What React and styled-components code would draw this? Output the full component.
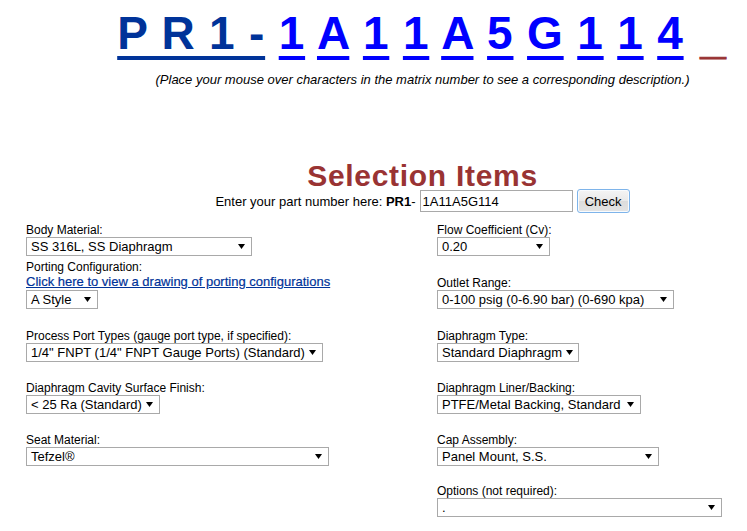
import React from "react";
import styled, { createGlobalStyle } from "styled-components";

const darkBlue = "#003399";
const brightBlue = "#0000ff";
const brick = "#993333";

const GlobalStyle = createGlobalStyle`
  body {
    margin: 8px;
    background: #ffffff;
    color: #000000;
    font-family: Arial, "Liberation Sans", sans-serif;
  }
`;

const Banner = styled.div`
  padding-left: 98px;
  text-align: center;
`;

const Matrix = styled.div`
  font-size: 46px;
  font-weight: bold;
  line-height: 51px;
  letter-spacing: 0.8px;
  white-space: nowrap;
`;

const PrefixLink = styled.a`
  color: ${darkBlue};
  text-decoration: underline;
  text-decoration-thickness: 4px;
  text-underline-offset: 7px;
`;

const CharLink = styled(PrefixLink)`
  color: ${brightBlue};
`;

// trailing blank position of the matrix number, drawn as a brick-red underscore
const Blank = styled.span`
  color: ${brick};
  line-height: 0;
  vertical-align: -4px;
  margin-left: 3px;
  -webkit-text-stroke: 0.8px ${brick};
  letter-spacing: 2px;
`;

const Hint = styled.p`
  margin: 13px 0 0;
  font-size: 13px;
  font-style: italic;
  line-height: 15px;
`;

const Title = styled.h1`
  margin: 75px 0 0;
  font-size: 30px;
  line-height: 28px;
  letter-spacing: 0.7px;
  font-weight: bold;
  color: ${brick};
`;

const EntryRow = styled.div`
  display: flex;
  justify-content: center;
  align-items: center;
  height: 22px;
  font-size: 13px;
`;

const Prompt = styled.span`
  white-space: nowrap;
`;

const PartInput = styled.input`
  box-sizing: border-box;
  width: 153px;
  height: 22px;
  margin: 0 0 0 4px;
  padding: 0 2px;
  border: 1px solid #a9a9a9;
  font-family: Arial, "Liberation Sans", sans-serif;
  font-size: 13px;
  color: #000;
  outline: none;
`;

const CheckButton = styled.button`
  box-sizing: border-box;
  width: 53px;
  height: 24px;
  margin-left: 4px;
  padding: 0;
  border: 1px solid #7eb4ea;
  border-radius: 3px;
  background: linear-gradient(#f4f4f4, #e9e9e9 50%, #dcdcdc 51%, #e4e4e4);
  box-shadow: inset 0 0 0 1px #f8fbfe;
  font-family: Arial, "Liberation Sans", sans-serif;
  font-size: 13px;
  color: #000;
`;

const Form = styled.div`
  margin-top: 11px;
  padding-left: 18px;
`;

const Row = styled.div`
  display: grid;
  grid-template-columns: 411px 1fr;
  align-items: end;
  margin-top: ${(p) => p.$gap}px;
`;

const Field = styled.div`
  display: flex;
  flex-direction: column;
  align-items: flex-start;
`;

const Label = styled.span`
  font-size: 12px;
  line-height: 14px;
`;

const DrawingLink = styled.a`
  font-size: 13px;
  line-height: 16px;
  color: ${darkBlue};
  text-decoration: underline;
  -webkit-text-stroke: 0.2px ${darkBlue};
`;

const SelectBox = styled.div`
  box-sizing: border-box;
  width: ${(p) => p.$w}px;
  height: 19px;
  display: flex;
  align-items: center;
  justify-content: space-between;
  padding: 0 6px 0 4px;
  border: 1px solid #a9a9a9;
  background: #fff;
  font-size: 13px;
  white-space: nowrap;
`;

const CaretSvg = styled.svg`
  flex-shrink: 0;
  margin-left: 4px;
`;

const Caret = () => (
  <CaretSvg width="7" height="5" viewBox="0 0 7 5">
    <path d="M0 0H7L3.5 5Z" fill="#000" />
  </CaretSvg>
);

const Select = ({ w, value }) => (
  <SelectBox $w={w}>
    <span>{value}</span>
    <Caret />
  </SelectBox>
);

const matrixChars = ["1", "A", "1", "1", "A", "5", "G", "1", "1", "4"];

export default function App() {
  return (
    <>
      <GlobalStyle />
      <Banner>
        <Matrix>
          <PrefixLink>P R 1 -</PrefixLink>
          {matrixChars.map((c, i) => (
            <React.Fragment key={i}>
              {" "}
              <CharLink>{c}</CharLink>
            </React.Fragment>
          ))}{" "}
          <Blank>_</Blank>
        </Matrix>
        <Hint>
          (Place your mouse over characters in the matrix number to see a
          corresponding description.)
        </Hint>
        <Title>Selection Items</Title>
        <EntryRow>
          <Prompt>
            Enter your part number here: <b>PR1</b>-
          </Prompt>
          <PartInput defaultValue="1A11A5G114" />
          <CheckButton>Check</CheckButton>
        </EntryRow>
      </Banner>

      <Form>
        <Row $gap={0}>
          <Field>
            <Label>Body Material:</Label>
            <Select w={226} value="SS 316L, SS Diaphragm" />
          </Field>
          <Field>
            <Label>Flow Coefficient (Cv):</Label>
            <Select w={113} value="0.20" />
          </Field>
        </Row>
        <Row $gap={4}>
          <Field>
            <Label>Porting Configuration:</Label>
            <DrawingLink>Click here to view a drawing of porting configurations</DrawingLink>
            <Select w={72} value="A Style" />
          </Field>
          <Field>
            <Label>Outlet Range:</Label>
            <Select w={237} value="0-100 psig (0-6.90 bar) (0-690 kpa)" />
          </Field>
        </Row>
        <Row $gap={20}>
          <Field>
            <Label>Process Port Types (gauge port type, if specified):</Label>
            <Select w={297} value={'1/4" FNPT (1/4" FNPT Gauge Ports) (Standard)'} />
          </Field>
          <Field>
            <Label>Diaphragm Type:</Label>
            <Select w={142} value="Standard Diaphragm" />
          </Field>
        </Row>
        <Row $gap={19}>
          <Field>
            <Label>Diaphragm Cavity Surface Finish:</Label>
            <Select w={134} value="< 25 Ra (Standard)" />
          </Field>
          <Field>
            <Label>Diaphragm Liner/Backing:</Label>
            <Select w={204} value="PTFE/Metal Backing, Standard" />
          </Field>
        </Row>
        <Row $gap={19}>
          <Field>
            <Label>Seat Material:</Label>
            <Select w={303} value="Tefzel®" />
          </Field>
          <Field>
            <Label>Cap Assembly:</Label>
            <Select w={222} value="Panel Mount, S.S." />
          </Field>
        </Row>
        <Row $gap={18}>
          <Field />
          <Field>
            <Label>Options (not required):</Label>
            <Select w={285} value="." />
          </Field>
        </Row>
      </Form>
    </>
  );
}
